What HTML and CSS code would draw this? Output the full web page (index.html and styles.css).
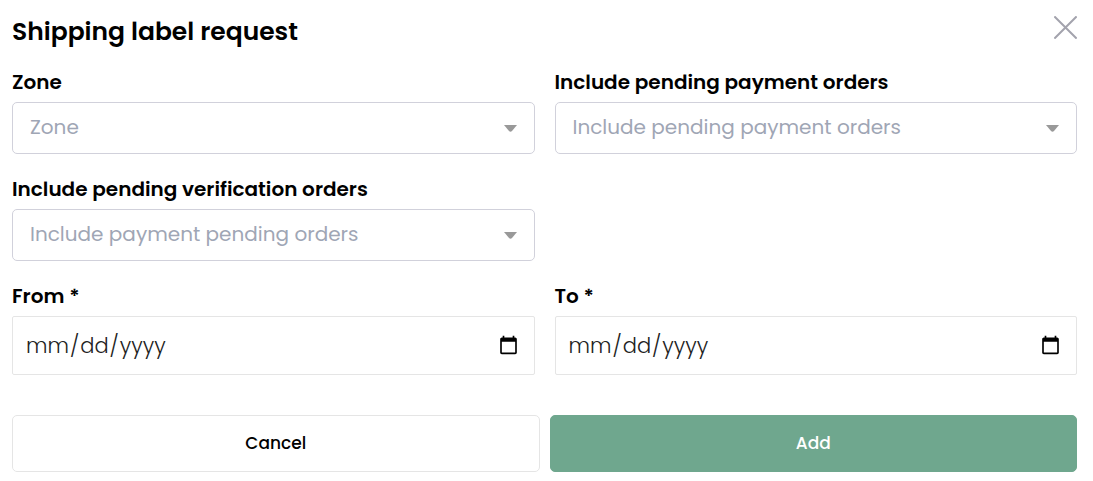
FILE: index.html
```html
<!DOCTYPE html>
<html lang="en">
<head>
<meta charset="utf-8">
<meta name="viewport" content="width=device-width, initial-scale=1">
<title>Shipping label request</title>
<link rel="stylesheet" href="styles.css">
</head>
<body>
<main class="dialog">
  <header class="dialog-header">
    <h1 class="dialog-title">Shipping label request</h1>
    <button class="close" type="button" aria-label="Close">
      <svg width="23" height="23" viewBox="0 0 23 23" fill="none" stroke="currentColor" stroke-width="2" aria-hidden="true"><path d="M.4.4l22.200 22.200M22.600.4L.4 22.600"/></svg>
    </button>
  </header>
  <form>
    <div class="fields">
      <div class="field">
        <label class="label" for="zone">Zone</label>
        <div class="select-wrap">
          <select class="select" id="zone"><option value="">Zone</option></select>
          <svg class="arrow" width="13" height="7" viewBox="0 0 13 7" aria-hidden="true"><path d="M0 0h13L8 5.900q-1.500 1.500-3 0z"/></svg>
        </div>
      </div>
      <div class="field">
        <label class="label" for="payment">Include pending payment orders</label>
        <div class="select-wrap">
          <select class="select" id="payment"><option value="">Include pending payment orders</option></select>
          <svg class="arrow" width="13" height="7" viewBox="0 0 13 7" aria-hidden="true"><path d="M0 0h13L8 5.900q-1.500 1.500-3 0z"/></svg>
        </div>
      </div>
      <div class="field field-new-row">
        <label class="label" for="verification">Include pending verification orders</label>
        <div class="select-wrap">
          <select class="select" id="verification"><option value="">Include payment pending orders</option></select>
          <svg class="arrow" width="13" height="7" viewBox="0 0 13 7" aria-hidden="true"><path d="M0 0h13L8 5.900q-1.500 1.500-3 0z"/></svg>
        </div>
      </div>
      <div class="field field-new-row">
        <label class="label" for="from">From *</label>
        <input class="date" id="from" type="date" required>
      </div>
      <div class="field">
        <label class="label" for="to">To *</label>
        <input class="date" id="to" type="date" required>
      </div>
    </div>
    <div class="actions">
      <button class="button button-cancel" type="button">Cancel</button>
      <button class="button button-add" type="submit">Add</button>
    </div>
  </form>
</main>
</body>
</html>
```
FILE: styles.css
```css
* {
  box-sizing: border-box;
}

body {
  margin: 0;
  background: #fff;
  color: #000;
  font-family: Poppins, Inter, sans-serif;
}

.dialog {
  padding: 12px 16px 9px 12px;
}

.dialog-header {
  display: flex;
  justify-content: space-between;
  align-items: flex-start;
  margin-bottom: 15px;
}

.dialog-title {
  margin: 0;
  font-size: 25px;
  line-height: 40px;
  font-weight: 600;
}

.close {
  display: flex;
  margin: 0;
  padding: 4px 0;
  border: 0;
  background: none;
  color: #a3a3ad;
  cursor: pointer;
}

.fields {
  display: grid;
  grid-template-columns: 1fr 1fr;
  gap: 20px;
}

.field {
  display: flex;
  flex-direction: column;
  gap: 5px;
  min-width: 0;
}

.field-new-row {
  grid-column-start: 1;
}

.label {
  font-size: 20px;
  line-height: 30px;
  font-weight: 600;
}

.select-wrap {
  display: grid;
  align-items: center;
}

.select,
.arrow {
  grid-area: 1 / 1;
}

.select {
  width: 100%;
  height: 52px;
  padding: 0 44px 2px 17px;
  border: 1px solid #d1d1db;
  border-radius: 5px;
  appearance: none;
  background: #fff;
  color: #9fa6b5;
  font: 400 20px/30px Poppins, Inter, sans-serif;
}

.arrow {
  justify-self: end;
  margin-right: 18px;
  fill: #999;
  pointer-events: none;
}

.date {
  width: 100%;
  height: 59px;
  padding: 0 13px 0 12px;
  border: 1px solid #e5e5e5;
  border-radius: 2px;
  background: #fff;
  color: #222;
  font: 300 21px/30px Poppins, Inter, sans-serif;
}

.actions {
  display: grid;
  grid-template-columns: 1fr 1fr;
  gap: 10px;
  margin-top: 40px;
}

.button {
  height: 57px;
  padding: 0 6px 2px;
  border: 1px solid #e5e5e5;
  border-radius: 5px;
  font: 500 17px/26px Poppins, Inter, sans-serif;
  cursor: pointer;
}

.button-cancel {
  background: #fff;
  color: #000;
}

.button-add {
  border-color: #6fa78e;
  background: #6fa78e;
  color: #fff;
}
```
